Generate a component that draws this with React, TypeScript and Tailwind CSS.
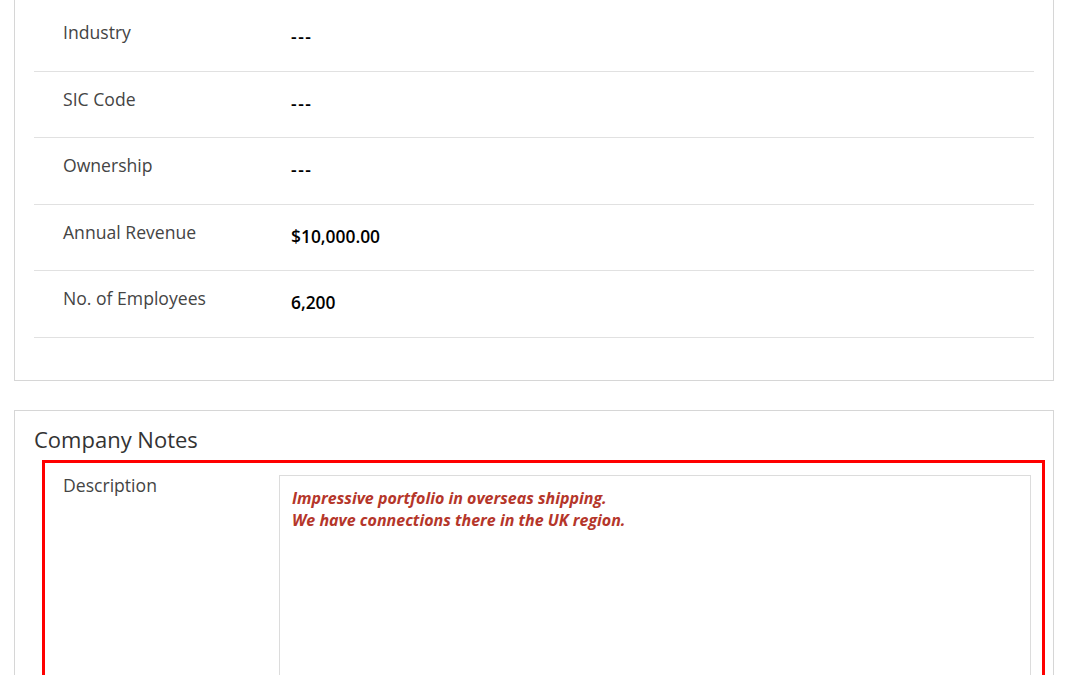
import React from "react";

const rows: { label: string; value: string }[] = [
  { label: "Industry", value: "---" },
  { label: "SIC Code", value: "---" },
  { label: "Ownership", value: "---" },
  { label: "Annual Revenue", value: "$10,000.00" },
  { label: "No. of Employees", value: "6,200" },
];

export default function App() {
  return (
    <div className="bg-white font-['Open_Sans',sans-serif] overflow-hidden h-[675px]">
      <div className="pl-[14px] pr-[26px]">
        <div className="border-x border-b border-[#d6d6d6] pl-[19px] pr-[19px] pt-[5px] pb-[42px]">
          {rows.map((r) => (
            <div key={r.label} className="flex h-[66.5px] border-b border-[#e1e1e1]">
              <div className="w-[257px] shrink-0 pl-[29px] pt-[17px] text-[17.6px] leading-[20px] text-[#444]">
                {r.label}
              </div>
              <div
                className={
                  r.value === "---"
                    ? "pt-[21px] text-[17.5px] leading-[20px] font-semibold text-black tracking-[1.5px]"
                    : "pt-[21px] text-[17.4px] leading-[20px] font-semibold text-black"
                }
              >
                {r.value}
              </div>
            </div>
          ))}
        </div>
        <div className="mt-[29px] border border-[#d6d6d6]">
          <div className="pl-[19px] pt-[14px] text-[22px] leading-[28px] text-[#333]">Company Notes</div>
          <div className="ml-[27px] mr-[8px] mt-[7px] border-[3px] border-[#ff0000] flex pl-[18px] pr-[11px] pt-[12px] pb-[20px]">
            <div className="w-[216px] shrink-0 text-[17.6px] leading-[20px] text-[#444]">Description</div>
            <div className="flex-1 h-[300px] border border-[#dcdcdc] pl-[12px] pt-[11px] text-[16px] leading-[22px] font-bold italic text-[#b5362a]">
              <div>Impressive portfolio in overseas shipping.</div>
              <div>We have connections there in the UK region.</div>
            </div>
          </div>
        </div>
      </div>
    </div>
  );
}
